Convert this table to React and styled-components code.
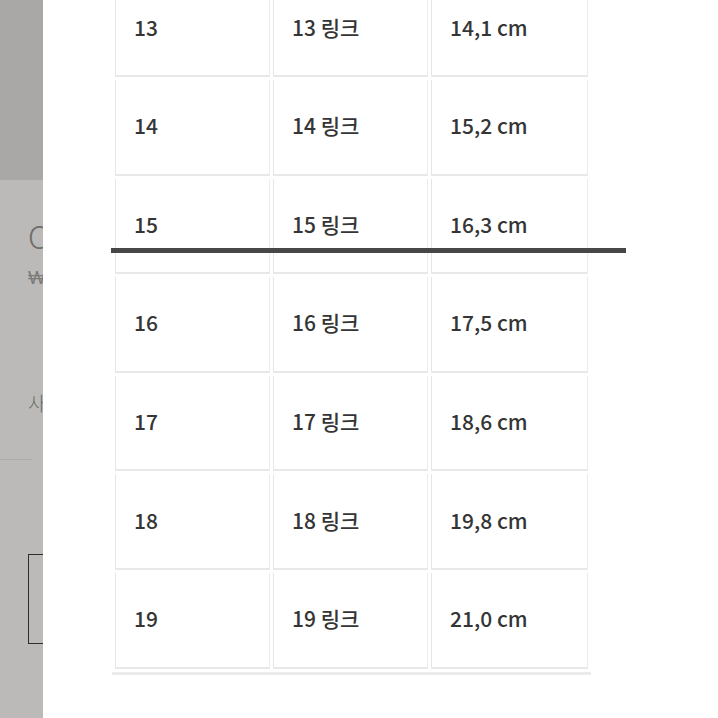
import React from 'react';
import styled, { createGlobalStyle } from 'styled-components';

const rows = [
  ['13', '13 링크', '14,1 cm'],
  ['14', '14 링크', '15,2 cm'],
  ['15', '15 링크', '16,3 cm'],
  ['16', '16 링크', '17,5 cm'],
  ['17', '17 링크', '18,6 cm'],
  ['18', '18 링크', '19,8 cm'],
  ['19', '19 링크', '21,0 cm'],
];

const GlobalStyle = createGlobalStyle`
  html, body {
    margin: 0;
    padding: 0;
    background: #fff;
    overflow: hidden;
  }
  body {
    font-family: "Noto Sans CJK KR", "Noto Sans", sans-serif;
  }
`;

const Screen = styled.div`
  width: 718px;
  height: 718px;
  display: flex;
  overflow: hidden;
  position: relative;
`;

const Backdrop = styled.div`
  width: 43px;
  flex-shrink: 0;
  display: flex;
  flex-direction: column;
  overflow: hidden;
  background: #bbbab8;
`;

const PhotoArea = styled.div`
  height: 180px;
  background: #a9a8a6;
`;

const Info = styled.div`
  padding-left: 28px;
  display: flex;
  flex-direction: column;
  white-space: nowrap;
`;

const Title = styled.div`
  margin-top: 36px;
  font-size: 31px;
  font-weight: 300;
  line-height: 40px;
  color: #6f6e6c;
`;

const Price = styled.div`
  margin-top: 8px;
  font-family: "DejaVu Sans", sans-serif;
  font-size: 19px;
  font-weight: 300;
  line-height: 26px;
  color: #7c7b79;
`;

const Option = styled.div`
  margin-top: 100px;
  font-size: 19px;
  font-weight: 300;
  line-height: 26px;
  color: #6a6967;
`;

const Divider = styled.div`
  margin: 43px 0 0 -28px;
  width: 32px;
  height: 1px;
  background: #aeadab;
`;

const OutlineButton = styled.div`
  margin-top: 94px;
  width: 60px;
  height: 88px;
  border: 1.5px solid #2e2e2e;
`;

const Panel = styled.div`
  flex: 1;
  background: #fff;
  position: relative;
  overflow: hidden;
`;

const Table = styled.table`
  margin: -21.6px 0 0 69px;
  border-collapse: separate;
  border-spacing: 3px;
  border-bottom: 3px solid #ebebeb;
`;

const Cell = styled.td`
  width: ${p => p.$w}px;
  height: 95.6px;
  box-sizing: border-box;
  padding: 0 0 3px 18px;
  border-left: 1.5px solid #e6e6e6;
  border-right: 1.5px solid #ececec;
  border-bottom: 2.5px solid #e8e8e8;
  border-top: 0;
  font-size: 21px;
  font-weight: 500;
  color: #353535;
  vertical-align: middle;
`;

const Marker = styled.div`
  position: absolute;
  left: 68px;
  top: 248px;
  width: 515px;
  height: 5px;
  background: #474747;
`;

export default function App() {
  return (
    <Screen>
      <GlobalStyle />
      <Backdrop>
        <PhotoArea />
        <Info>
          <Title>C</Title>
          <Price>₩</Price>
          <Option>사</Option>
          <Divider />
          <OutlineButton />
        </Info>
      </Backdrop>
      <Panel>
        <Table>
          <tbody>
            {rows.map(r => (
              <tr key={r[0]}>
                <Cell $w={155}>{r[0]}</Cell>
                <Cell $w={155}>{r[1]}</Cell>
                <Cell $w={157}>{r[2]}</Cell>
              </tr>
            ))}
          </tbody>
        </Table>
        <Marker />
      </Panel>
    </Screen>
  );
}
